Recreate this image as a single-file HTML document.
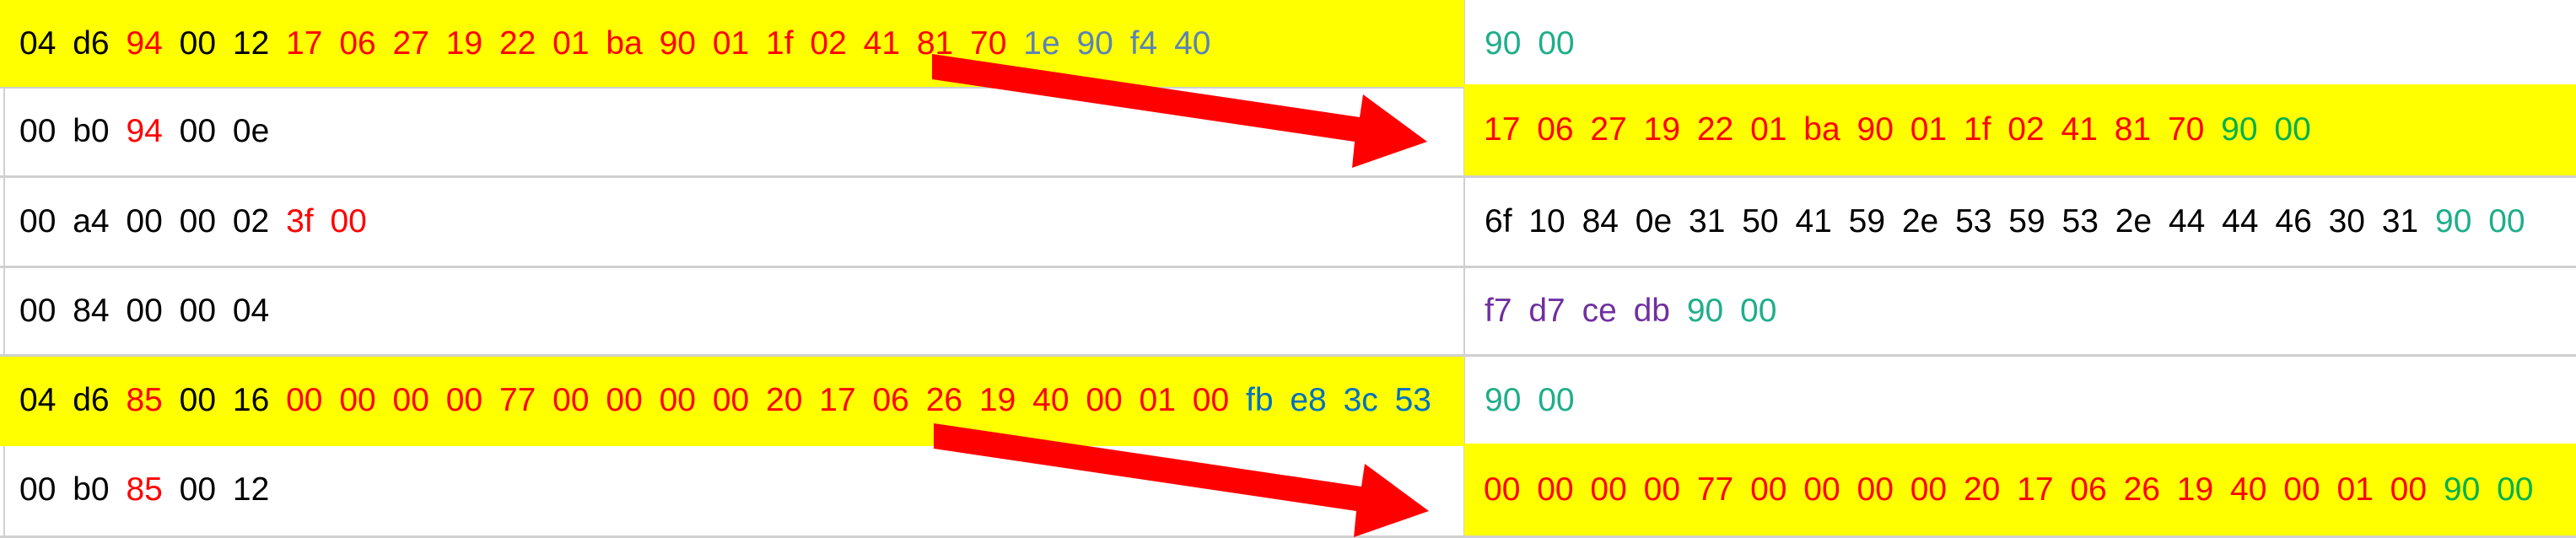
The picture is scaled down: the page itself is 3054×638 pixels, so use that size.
<!DOCTYPE html>
<html><head><meta charset="utf-8"><style>
body{margin:0;width:3054px;height:638px;background:#fff;position:relative;overflow:hidden;font-family:"Liberation Sans",sans-serif;}
.c{position:absolute;height:104px;line-height:104px;font-size:39px;letter-spacing:0;word-spacing:9px;white-space:nowrap;padding-left:23px;box-sizing:border-box;}
.y{background:#ffff00}
.h{position:absolute;left:0;width:3054px;height:3px;background:#d0d0d0}
.v{position:absolute;left:1735px;width:2px;background:#d0d0d0}
.r{color:#ff0000}.g{color:#00b050}.t{color:#1fae8a}.b{color:#5b83b5}.p{color:#7030a0}.bl{color:#0070c0}.k{color:#000}
</style></head><body>
<div class="h" style="top:102px"></div><div class="h" style="top:208px"></div><div class="h" style="top:315px"></div><div class="h" style="top:420px"></div><div class="h" style="top:526px"></div><div class="h" style="top:635px"></div>
<div class="v" style="top:0;height:638px"></div>
<div style="position:absolute;left:4px;top:0;width:2px;height:638px;background:#d0d0d0"></div>

<div class="c y" style="left:0;top:0;width:1736px;height:103px">04 d6 <span class="r">94</span> 00 12 <span class="r">17 06 27 19 22 01 ba 90 01 1f 02 41 81 70</span> <span class="b">1e 90 f4 40</span></div>
<div class="c" style="left:1737px;top:0;width:1317px"><span class="t">90 00</span></div>

<div class="c" style="left:0;top:104px;width:1735px">00 b0 <span class="r">94</span> 00 0e</div>
<div class="c y" style="left:1736px;top:100px;width:1318px;height:108px;line-height:108px"><span class="r">17 06 27 19 22 01 ba 90 01 1f 02 41 81 70</span> <span class="g">90 00</span></div>

<div class="c" style="left:0;top:211px;width:1735px">00 a4 00 00 02 <span class="r">3f 00</span></div>
<div class="c" style="left:1737px;top:211px;width:1317px">6f 10 84 0e 31 50 41 59 2e 53 59 53 2e 44 44 46 30 31 <span class="t">90 00</span></div>

<div class="c" style="left:0;top:317px;width:1735px">00 84 00 00 04</div>
<div class="c" style="left:1737px;top:317px;width:1317px"><span class="p">f7 d7 ce db</span> <span class="t">90 00</span></div>

<div class="c y" style="left:0;top:423px;width:1736px;height:106px">04 d6 <span class="r">85</span> 00 16 <span class="r">00 00 00 00 77 00 00 00 00 20 17 06 26 19 40 00 01 00</span> <span class="bl">fb e8 3c 53</span></div>
<div class="c" style="left:1737px;top:423px;width:1317px"><span class="t">90 00</span></div>

<div class="c" style="left:0;top:529px;width:1735px">00 b0 <span class="r">85</span> 00 12</div>
<div class="c y" style="left:1736px;top:526px;width:1318px;height:109px;line-height:109px"><span class="r">00 00 00 00 77 00 00 00 00 20 17 06 26 19 40 00 01 00</span> <span class="g">90 00</span></div>

<svg style="position:absolute;left:0;top:0" width="3054" height="638">
<polygon points="1105,64 1612,139 1616,112 1692,168 1603,199 1606,168 1105,94" fill="#ff0000"/>
<polygon points="1105,64 1612,139 1616,112 1692,168 1603,199 1606,168 1105,94" fill="#ff0000" transform="translate(2,438)"/>
</svg>
</body></html>
